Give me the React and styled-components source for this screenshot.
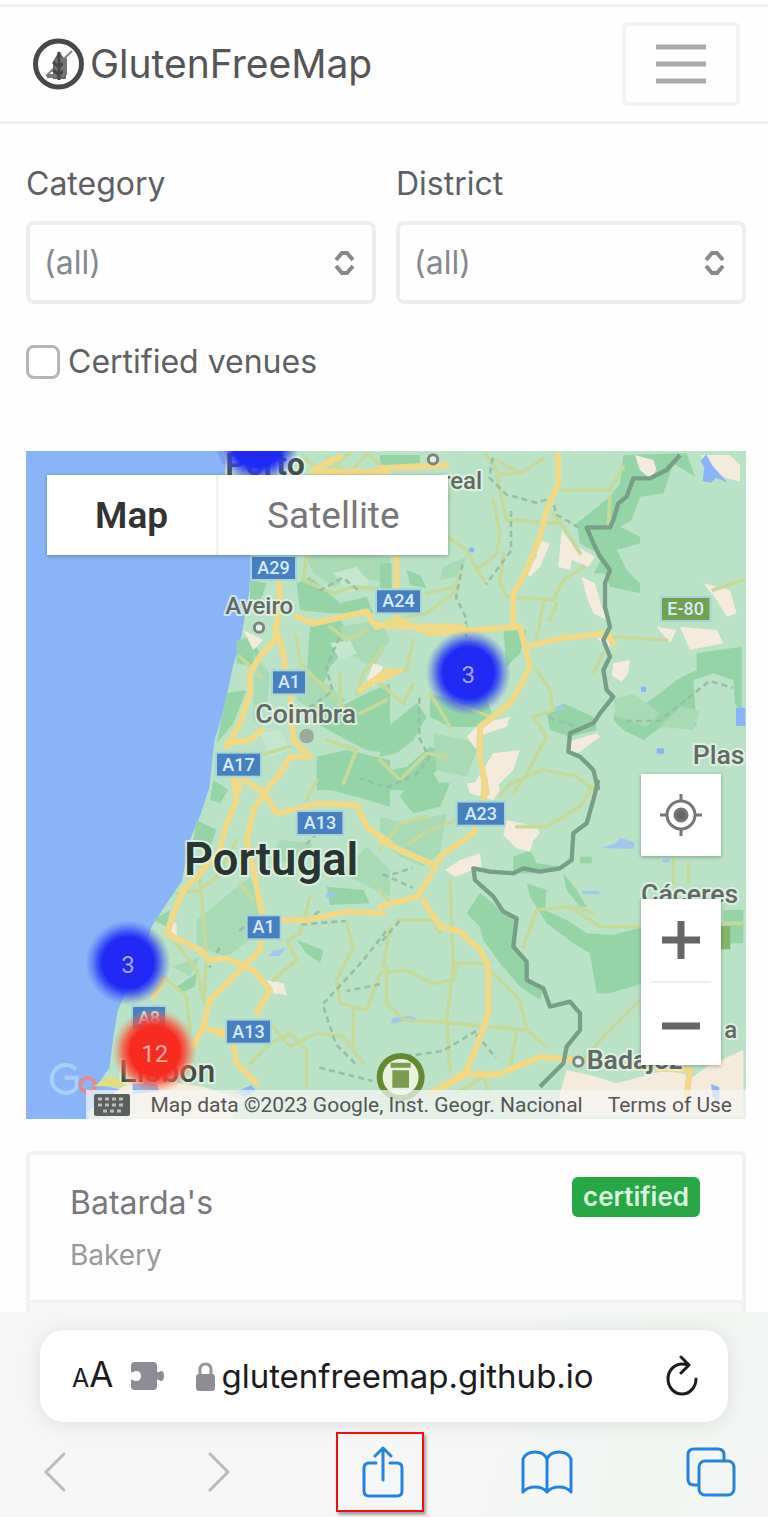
import React from "react";
import styled, { createGlobalStyle } from "styled-components";

const GlobalStyle = createGlobalStyle`
  *, *::before, *::after { box-sizing: border-box; }
  body {
    margin: 0;
    background: #fefefe;
    color: #5e6063;
    font-family: Inter, "Liberation Sans", sans-serif;
  }
  button { margin: 0; padding: 0; border: 0; background: none; font: inherit; color: inherit; cursor: pointer; }
  svg { display: block; }
`;

const Page = styled.div`
  min-height: 100vh;
  padding-top: 4px;
  display: flex;
  flex-direction: column;
`;

const Header = styled.header`
  display: flex;
  align-items: center;
  justify-content: space-between;
  height: 120px;
  padding: 0 28px 0 32px;
  border-top: 3px solid #f1f1f1;
  border-bottom: 3px solid #efefef;
`;

const Brand = styled.a`
  display: flex;
  align-items: center;
  gap: 5px;
  color: #555;
  font-size: 39px;
  line-height: 48px;
  text-decoration: none;
`;

const MenuButton = styled.button`
  display: grid;
  place-items: center;
  width: 118px;
  height: 84px;
  border: 4px solid #f2f2f2;
  border-radius: 6px;
`;

const Content = styled.main`
  display: flex;
  flex-direction: column;
  padding: 40px 22px 0 26px;
`;

const Filters = styled.div`
  display: grid;
  grid-template-columns: 1fr 1fr;
  gap: 20px;
`;

const Field = styled.div`
  display: flex;
  flex-direction: column;
  gap: 17px;
`;

const Label = styled.label`
  font-size: 32px;
  line-height: 40px;
`;

const SelectBox = styled.div`
  position: relative;
  svg { position: absolute; right: 20px; top: 28px; pointer-events: none; }
`;

const Select = styled.select`
  appearance: none;
  width: 100%;
  height: 83px;
  padding: 0 56px 0 14px;
  border: 4px solid #eceeee;
  border-radius: 8px;
  background: #fefefe;
  color: #85898d;
  font: inherit;
  font-size: 32px;
`;

const CheckRow = styled.div`
  display: flex;
  align-items: center;
  gap: 8px;
  margin: 38px 0 69px;
`;

const Checkbox = styled.input`
  appearance: none;
  width: 34px;
  height: 34px;
  margin: 0;
  border: 3px solid #b5b5b5;
  border-radius: 8px;
  background: #fff;
`;

const MapFrame = styled.section`
  position: relative;
  aspect-ratio: 720 / 668;
  overflow: hidden;
  background: #8ab4f8;
  font-family: Roboto, "Liberation Sans", sans-serif;
`;

const MapArt = styled.svg`
  width: 100%;
  height: 100%;
`;

const TypeSwitch = styled.div`
  position: absolute;
  left: 21px;
  top: 24px;
  display: flex;
  background: #fff;
  box-shadow: 0 1px 4px rgba(0, 0, 0, 0.3);
`;

const TypeButton = styled.button`
  height: 80px;
  padding: 0 48px;
  color: ${(p) => (p.$active ? "#333" : "#777")};
  font-size: 37px;
  font-weight: ${(p) => (p.$active ? 600 : 400)};
  & + & { border-left: 3px solid #f2f2f2; }
`;

const MapTools = styled.div`
  position: absolute;
  right: 25px;
  bottom: 54px;
  display: flex;
  flex-direction: column;
  gap: 43px;
`;

const ToolGroup = styled.div`
  display: flex;
  flex-direction: column;
  align-items: center;
  width: 80px;
  background: #fff;
  box-shadow: 0 1px 4px rgba(0, 0, 0, 0.3);
`;

const ToolButton = styled.button`
  display: grid;
  place-items: center;
  width: 80px;
  height: 82px;
`;

const ToolRule = styled.span`
  width: 60px;
  height: 2px;
  background: #eee;
`;

const Attribution = styled.footer`
  position: absolute;
  right: 0;
  bottom: 0;
  display: flex;
  align-items: center;
  height: 29px;
  padding: 0 14px 0 8px;
  background: rgba(245, 245, 245, 0.72);
  color: #555;
  font-size: 21px;
  line-height: 28px;
  white-space: nowrap;
  a { margin-left: 25px; color: inherit; text-decoration: none; }
  button { margin-right: 20px; }
`;

const Card = styled.article`
  margin-top: 32px;
  border: 4px solid #f1f1f1;
  border-bottom: 0;
  border-radius: 6px 6px 0 0;
`;

const CardBody = styled.div`
  display: flex;
  justify-content: space-between;
  align-items: flex-start;
  height: 145px;
  padding: 22px 42px 0 40px;
`;

const VenueName = styled.h2`
  margin: 0 0 12px;
  color: #77797c;
  font-size: 32px;
  font-weight: 400;
  line-height: 52px;
`;

const VenueKind = styled.p`
  margin: 0;
  color: #97999b;
  font-size: 28px;
  line-height: 28px;
`;

const Badge = styled.span`
  padding: 0 11px;
  border-radius: 6px;
  background: #28a745;
  color: #def5e3;
  font-size: 26px;
  font-weight: 600;
  line-height: 40px;
`;

const CardFoot = styled.div`
  height: 12px;
  border-top: 3px solid #f1f1f1;
  background: #f7f7f7;
`;

const BrowserBar = styled.footer`
  display: flex;
  flex-direction: column;
  flex: 1;
  gap: 10px;
  padding: 18px 0 5px;
  background: linear-gradient(105deg, #f6f6f6 60%, #f1f6f2 85%, #f5f6f5);
`;

const AddressBar = styled.div`
  display: flex;
  align-items: center;
  height: 92px;
  margin: 0 40px;
  padding: 0 29px 0 32px;
  border-radius: 24px;
  background: #fff;
  box-shadow: 0 2px 20px rgba(0, 0, 0, 0.1);
  color: #1c1c1e;
`;

const TextSize = styled.button`
  display: flex;
  align-items: baseline;
  margin-right: 18px;
  font-size: 35px;
  line-height: 40px;
  small { font-size: 25px; }
`;

const Puzzle = styled.svg`
  flex: none;
  margin-right: 32px;
`;

const Address = styled.input`
  flex: 1;
  min-width: 0;
  height: 60px;
  margin-left: 6px;
  padding: 0;
  border: 0;
  background: none;
  color: inherit;
  font: inherit;
  font-size: 33px;
`;

const Toolbar = styled.nav`
  display: flex;
  justify-content: space-between;
  padding: 0 29px 0 27px;
`;

const NavButton = styled.button`
  position: relative;
  display: grid;
  place-items: center;
  width: 56px;
  height: 80px;
  color: ${(p) => (p.$muted ? "#bcbcbc" : "#2583dc")};
`;

const Marker = styled.span`
  position: absolute;
  inset: 0 -13px 0 -19px;
  border: 2px solid #f00d0d;
  box-shadow: 2px 3px 3px rgba(0, 0, 0, 0.35);
`;

const Logo = () => (
  <svg width="53" height="54" viewBox="0 0 53 54" fill="none" stroke="#484848" aria-hidden="true">
    <circle cx="26.500" cy="27" r="23" strokeWidth="5" />
    <path d="M14 39 40 14" strokeWidth="2" stroke="#888" />
    <path d="M22 41V25l5-9 6 8v17z" fill="#777" stroke="#666" strokeWidth="2" />
    <path d="M27 15v28M21 25l6 5 6-5M21 33l6 5 6-5" strokeWidth="3" />
    <path d="M15 39h9M33 21v17" strokeWidth="4" stroke="#777" />
  </svg>
);

const Arrows = () => (
  <svg width="23" height="28" viewBox="0 0 23 28" fill="none" stroke="#85898c" strokeWidth="4" aria-hidden="true">
    <path d="m3 11 6-7h5l6 7M3 17l6 7h5l6-7" />
  </svg>
);

const Shield = ({ x, y, w = 135, fill = "#4680c0", children }) => (
  <g>
    <rect x={x} y={y} width={w} height="72" fill={fill} stroke="#a9d4d8" strokeWidth="6" />
    <text x={x + w / 2} y={y + 54} textAnchor="middle" fontSize="54" fontWeight="500" fill="#d7eafc">{children}</text>
  </g>
);

const Place = ({ x, y, size = 72, weight = 500, fill = "#626a65", children }) => (
  <text x={x} y={y} fontSize={size} fontWeight={weight} fill={fill} stroke="#e6f3e9" strokeWidth="12" strokeOpacity=".8" paintOrder="stroke" strokeLinejoin="round">
    {children}
  </text>
);

const Cluster = ({ x, y, tone, children }) => (
  <g>
    <circle cx={x} cy={y} r="128" fill={`url(#${tone})`} />
    <text x={x} y={y + 32} textAnchor="middle" fontSize="72" fill={tone === "red" ? "#ffaaa0" : "#a3a4ff"}>{children}</text>
  </g>
);

/* Map art is drawn in four tiles, three units to a pixel. */
const MapDrawing = () => (
  <MapArt viewBox="0 0 2160 2004" preserveAspectRatio="xMidYMid slice" role="img" aria-label="Map of central Portugal">
    <defs>
      <radialGradient id="blue">
        <stop offset="0" stopColor="#2328ef" />
        <stop offset=".6" stopColor="#2029f5" />
        <stop offset=".72" stopColor="#2a3cf5" stopOpacity=".8" />
        <stop offset="1" stopColor="#4a62f5" stopOpacity="0" />
      </radialGradient>
      <radialGradient id="red">
        <stop offset="0" stopColor="#f22b20" />
        <stop offset=".58" stopColor="#f92a20" />
        <stop offset=".75" stopColor="#fa4b38" stopOpacity=".75" />
        <stop offset="1" stopColor="#fd8a60" stopOpacity="0" />
      </radialGradient>
    </defs>

    <rect width="2160" height="2004" fill="#8ab4f8" />
    <path fill="#bae2c6" d="M585 0 610 60 665 200 675 315 670 420 645 560 620 650 592 780 565 870 550 1010 520 1100 490 1170 468 1290 420 1360 375 1430 350 1530 310 1600 275 1680 262 1760 250 1850 215 1900 300 1920 420 1905 380 1950 180 1980 190 2004H2160V0z" />

    {/* woodland */}
    <g fill="#94d4a7" transform="translate(-18 -33)">
      <path d="M690 420 740 430 715 500 690 510zM830 430 870 410 960 490 1040 470 1060 520 930 520 840 510zM650 600 690 590 720 640 700 680 650 670zM620 760 680 750 640 850 590 910zM870 560 960 540 1000 600 930 680 900 760 860 700zM880 780 960 800 1040 760 1110 730V940L1040 930 980 900 890 850zM890 950 980 930 1110 960V1050H890z" />
      <path fill="#a8dab5" d="M850 330 1110 350V430L1010 410 940 440 880 400zM960 560 1080 540 1110 600 1060 680 980 640zM700 640 750 700 740 800 700 850zM830 680 900 720 980 780 900 820 830 780z" />
      <path fill="#c6e7cf" d="m940 400 70-20 40 50-60 30zM930 610l60-10 20 40-50 20zM720 880l60-10 30 60-60 20z" />
    </g>
    <g fill="#94d4a7" transform="translate(1062 -33)">
      <path d="M0 45h120v30H0zM0 370h35v100H0zM80 390l40 15 20 40-50-10zM730 45 920 40 945 110 880 70 850 160 780 170 755 240 720 260 780 290 780 310 710 330 740 390 780 430 780 460 690 440 675 400 640 400 670 350 600 310 590 250 690 170 720 130z" />
      <path d="M950 640 1085 620V830L1065 790 1060 720 1000 700 940 720 950 860 860 850 790 900 730 870 700 840 720 770 800 790 890 720 950 690zM500 820 550 790 640 830 650 870 570 890 510 870z" />
      <path d="M150 760 250 790 310 750 350 860 210 860 150 830zM370 570 440 570 420 640 380 680zM0 880 110 790 140 830 100 900 50 940 0 950zM150 920 230 940 160 1000 190 1050H0V1000L80 980z" />
      <path fill="#a8dab5" d="M190 380 260 350 230 410 180 420zM700 780 760 760 840 820 800 860 710 830zM840 860l100 10 20-60-60-10zM160 880l140 30-40 100-90-20z" />
    </g>
    <g fill="#94d4a7" transform="translate(-18 987)">
      <path d="M580 0 625 30 600 70 570 60zM530 120 590 150 570 200 520 180zM890 20 1110 10V80L1010 50zM920 320 1030 330 1050 370 930 375zM470 620 530 580 525 620 480 640zM400 420 450 390 440 440zM830 480 910 510 900 550 860 520z" />
      <path fill="#a8dab5" d="m530 420 160-130 40 80-40 110-70 50-90-30zM960 280l80-80 70 70v80zM460 560l80-30-30 60zM780 180l100 10-40 60-90-10z" />
    </g>
    <g fill="#94d4a7" transform="translate(1062 987)">
      <path d="M90 0 210 10 180 80 100 100 60 50zM300 340 340 370 370 400 405 420 400 500 440 550 440 600 490 630 480 660 420 620 360 550 310 480 300 440 260 400zM440 310 500 330 495 390 560 420 620 460 700 465 790 440V610L690 640 650 640 630 520 580 490 500 430 450 350zM400 230 450 210 470 250 550 260 480 280 400 280zM550 280 590 330 620 380 600 380 560 330zM1030 390h60v100h-60zM600 230h35v20h-35z" />
      <path fill="#a8dab5" d="M0 110 80 130 200 100 180 220 130 260 60 230 0 180zM1000 870l60 30v30h-60z" />
    </g>

    {/* built-up areas */}
    <g fill="#f5ebdc" transform="translate(1062 -33)">
      <path d="M765 45 820 60 830 90 810 115 780 90zM960 45h90l30 30v50l-70-20zM475 300l35 10-30 70-30 30-10-10 30-50zM545 270l30 40 70 40-20 30-50-20-5 30-35-10zM605 410l40 20 20 70 15 40-40-20-20-50zM970 430l80 20 20 70-30 10-30-50zM830 560l60 10-20 40zM900 560l110 10 20 40-100 20zM700 670l50-10-5 40-20 25-30-20zM650 880l10 10-60 45-30 10-5-40zM340 940l80-10-20 60-60 60h-70zM260 890l40-40 90-20-10 30-90 30v40zM650 590l50 10-20 30z" />
    </g>
    <g fill="#f5ebdc" transform="translate(1062 987)">
      <path d="M260 10 350 0 360 30 340 60 270 40zM380 120l90 20 10 20-20 20-10 35-40-10-40-40zM240 240l60-20 5 40-80 30-30-20zM540 940l20-70 90 20 60 20 150-40 80 20 40-30 110-50v200H540z" />
    </g>
    <g fill="#f5ebdc" transform="translate(-18 987)">
      <path d="m740 600 50 10 10 35-40-5zM450 430h20v40h-30zM480 910l70 10 120 40-40 60H300l-90-30 70-50 90-60z" />
      <path d="m1060-350 30 10-30 60-20-20zM670-450l60 30-30 30z" />
    </g>

    {/* water */}
    <g fill="#8ab4f8">
      <path d="m2040 10 20 35 45 50-35-15-15 15-25-5 5-40-10-20zM2130 770h28v55h-28zM1845 707h15v15h-15zM1892 892h22v16h-22zM1330 290h14v14h-14z" />
      <path fill="#a3c6ee" d="m1725 1190 40-12 20-18 40 15v18h-45zM1670 1320h50v10h-50zM1100 1700l55-5 20 8-45 8-35 8zM740 1500l40-10-20 25h-30zM900 1325h25v14h-25zM1590 765h25v12h-25zM1910 1225h20v10h-20z" />
      <path d="m2055 1900 25 8v50l-20-20zM320 1880l60-20 20 60-80 10zM625 1925l50-22 15 14-30 20z" />
    </g>

    {/* secondary roads */}
    <g fill="none" stroke="#c5d99b" strokeWidth="11" strokeLinejoin="round" strokeLinecap="round">
      <g transform="translate(-18 -33)">
        <path d="m850 50 60 50 80-60M920 50l60 60 60-70 60 50M860 350l-10 70 90 40 60-20 110 10M830 590l10 80 100 100M930 560l50 40 60-30M1020 820l80-40M1010 760l20-60 60-80M920 900l90 30-40 100M960 700v90l50 60M700 950l110-30M660 650l60 60" />
      </g>
      <g transform="translate(1062 -33)">
        <path d="m320 45 40 60 70-10 60-40M350 110l30 130 160 10M540 150h150l40-70M340 180l20 100-10 60-60 50 30 40M350 60l70 40M520 220l30 40 50 80M200 290l60 40 30 60M370 340l-10 90 20 40 140 10 30-60 60-40M240 400l-20 60-80 60-60 10M490 490l-20 110M530 490l-20 50M210 170l-60 0M100 600l-20 90-60 20M470 690l40 60 10 60-60 20 40 60-60 110-40 60M390 1030l100-40 100 20 50 40M0 730l70 60 30-60M150 760l60 100M230 790l100 40M140 460l90-20M0 960l60 60 80-80 60 10M640 700l30-60M690 170l-5 90M690 590l170 10M1000 450l90-30" />
      </g>
      <g transform="translate(-18 987)">
        <path d="m650 180-60 110-50 40-70 10M660 310l40 50M540 300l20 230-10 140M870 350l-30 110-40 20 30 60-70 60M980 430l20 70-50 100 10 70 80 20 40-110M1000 680v120M690 850l60-60 60-30 50 50v110M750 730l60 70 80-40 80 10 60 80M430 590l70 60 10 100M460 480l70 90 20 90M860 60l30-60M1080 330l30 40" />
      </g>
      <g transform="translate(1062 987)">
        <path d="m0 580 80-10 80 40 60-10 10-50h100M20 560v110l50 50 160 10 200 20M210 300l10 260-20 160 10 150M50 420h110l20 40M0 210l60-80 80-20M90 190l40-30 100-40M30 440l-20 120M340 580l80 80 20 90 60 50M360 740l50 10-20 120M430 500l40-110 100-10 90 60h120M590 380l50 20M650 0l-50 80-100 60-90 0M390 10l-30 40M880 240v70M925 250v60M610 840l60-70 110-110M230 940l80-50 30 80M1030 430h60" />
      </g>
    </g>

    {/* district lines */}
    <g fill="none" stroke="#97bfa5" strokeWidth="8" strokeDasharray="18 12" strokeLinejoin="round">
      <path d="M1400 20 1390 80 1440 130 1530 155 1580 140 1590 190 1660 230M1455 180V300L1380 400M1310 340l-20 100 30 60v80M1180 740v120l30 60-40 50-90 40-80-30M880 420l70-40 50 40M940 560l-40 90 20 70-70 50" />
      <path d="m880 1380-50 40 130-10M1080 1440l-70 90-120 130 40 120 60 60M1062 1600l-100 20M1350 1740l-100 60-140 20M1350 1750l60 70M880 1850l160 40M1120 1410l-60 70M1100 1270l60-20M840 1180l90-90M1800 810l100 0 150-120 70 20" />
      <path d="M1070 1270l90 40M1570 800l90 30M580 1490l-30 60M640 1440l70-60" />
    </g>

    {/* motorways */}
    <g fill="none" strokeLinejoin="round" strokeLinecap="round">
      {["#e6da96", "#f3d983"].map((colour, i) => (
        <g key={colour} stroke={colour} strokeWidth={i ? 12 : 19}>
          <g transform="translate(-18 -33)">
            <path d="M775 400 780 480 765 600 720 650 690 700 690 760 660 850 620 920M765 560 790 640 800 700 815 800 820 900 870 950 810 950 780 1000 730 1060M830 530 880 550 1040 515 1060 550 1110 560M620 910 690 900 725 870M660 1050 640 1000 720 1050M880 90 960 50M880 95 1100 95M1110 690 1020 750" />
          </g>
          <g transform="translate(1062 -33)">
            <path d="M535 45V130L500 210 480 290 440 390 400 460V560M50 340V560M-10 560 60 540 150 580 420 560 430 600 450 680 420 740 390 790 300 860 300 950 320 1060M440 620 540 595 680 580M0 720 60 690M680 580 700 610M50 560H250M0 85 200 75" />
          </g>
          <g transform="translate(-18 987)">
            <path d="M640 0 650 60 620 130 600 210 540 280 490 330 465 390 440 460 540 510 570 540 620 535 700 570 750 630 710 700M740 30 700 90 680 180 700 270 720 370 730 420H860L980 395 1090 400M730 430 720 510 640 590 570 660 550 740 520 800M740 50 770 100 900 70 1010 75 1040 140 1110 190M600 750 640 790 650 850 710 910M550 740 620 770M400 650l30-50" />
          </g>
          <g transform="translate(1062 987)">
            <path d="M0 380 110 350 150 290 180 230 280 160 310 60 315 0M0 180 60 210 150 250M130 360 180 440 240 455 300 510 325 560 325 700 290 800 250 890 150 940M170 930 250 880 350 885 480 830 590 840M730 860l200 10-10 80" />
          </g>
        </g>
      ))}
    </g>

    {/* national border */}
    <g fill="none" stroke="#779e87" strokeWidth="13" strokeLinejoin="round">
      <path transform="translate(1062 -33)" d="M900 45 860 90 810 115H760L740 170 715 190 700 240 690 262H620L640 310 660 350 690 390 675 430V500L690 560 670 600 690 650 670 690 680 750 700 770 660 820 640 850 570 880 565 935 600 950 640 990 655 1050" />
      <path transform="translate(1062 987)" d="M655 0 640 60 620 130 580 160 575 240 540 265 480 275 430 265 400 280 330 275 280 265 285 300 340 350 370 395 410 415 400 500 440 545V600L490 625 510 680 570 665 600 700V750L560 800 550 850 480 920" />
    </g>

    <Shield x={675} y={315}>A29</Shield>
    <Shield x={1050} y={415}>A24</Shield>
    <Shield x={738} y={658} w={102}>A1</Shield>
    <Shield x={570} y={905}>A17</Shield>
    <Shield x={812} y={1080} w={140}>A13</Shield>
    <Shield x={1292} y={1052} w={145}>A23</Shield>
    <Shield x={662} y={1393} w={102}>A1</Shield>
    <Shield x={600} y={1706}>A13</Shield>
    <Shield x={318} y={1665} w={102}>A8</Shield>
    <Shield x={1905} y={438} w={148} fill="#71a04f">E-80</Shield>
    <rect x="2085" y="1425" width="28" height="70" fill="#83b66b" />

    <g fill="#e8efe9" stroke="#7d8580" strokeWidth="9">
      <circle cx="699" cy="530" r="14" />
      <circle cx="1221" cy="25" r="14" />
      <circle cx="1657" cy="1832" r="14" />
    </g>
    <circle cx="842" cy="855" r="22" fill="#9caa9e" />

    <Place x={598} y={72} size={96} weight={700} fill="#45504a">Porto</Place>
    <Place x={1248} y={115}>real</Place>
    <Place x={598} y={490}>Aveiro</Place>
    <Place x={688} y={815} size={80}>Coimbra</Place>
    <Place x={474} y={1272} size={136} weight={600} fill="#293530">Portugal</Place>
    <Place x={2000} y={940} size={80}>Plas</Place>
    <Place x={1845} y={1356} size={80}>Cáceres</Place>
    <Place x={1682} y={1855} size={80} weight={600}>Badajoz</Place>
    <Place x={2095} y={1762}>a</Place>
    <Place x={280} y={1892} size={96} fill="#444c49">Lisbon</Place>

    <circle cx="1124" cy="1878" r="72" fill="#648a31" />
    <circle cx="1124" cy="1878" r="54" fill="#e9f2df" />
    <path d="M1094 1850h60v-15h-60zm5 8h50v52h-50z" fill="#7b9b4e" />

    <g fill="none" strokeWidth="12">
      <path d="M150 1855a42 42 0 1 0 2 55v-30h-36" stroke="#a9d0fb" />
      <circle cx="185" cy="1902" r="22" stroke="#e08a96" />
      <path d="m225 1900 30-18 30 18z" stroke="#e9dd78" />
    </g>

    <Cluster x={694} y={-28} tone="blue" />
    <Cluster x={1327} y={665} tone="blue">3</Cluster>
    <Cluster x={306} y={1535} tone="blue">3</Cluster>
    <Cluster x={386} y={1800} tone="red">12</Cluster>
  </MapArt>
);

const App = () => (
  <>
    <GlobalStyle />
    <Page>
      <Header>
        <Brand href="#"><Logo />GlutenFreeMap</Brand>
        <MenuButton type="button" aria-label="Menu">
          <svg width="50" height="42" viewBox="0 0 50 42" stroke="#aaa" strokeWidth="5">
            <path d="M0 4h50M0 21h50M0 38h50" />
          </svg>
        </MenuButton>
      </Header>

      <Content>
        <Filters>
          {["Category", "District"].map((name) => (
            <Field key={name}>
              <Label htmlFor={name}>{name}</Label>
              <SelectBox>
                <Select id={name}><option>(all)</option></Select>
                <Arrows />
              </SelectBox>
            </Field>
          ))}
        </Filters>
        <CheckRow>
          <Checkbox id="certified" type="checkbox" />
          <Label htmlFor="certified">Certified venues</Label>
        </CheckRow>

        <MapFrame>
          <MapDrawing />
          <Attribution>
            <button type="button" aria-label="Keyboard shortcuts">
              <svg width="36" height="22" viewBox="0 0 36 22" fill="#5b605f">
                <rect width="36" height="22" rx="2" />
                <path d="M4 5h28M4 11h28M9 17h18" stroke="#b9bdbb" strokeWidth="3" strokeDasharray="4 3" />
              </svg>
            </button>
            Map data ©2023 Google, Inst. Geogr. Nacional
            <a href="#terms">Terms of Use</a>
          </Attribution>
          <TypeSwitch>
            <TypeButton type="button" $active>Map</TypeButton>
            <TypeButton type="button">Satellite</TypeButton>
          </TypeSwitch>
          <MapTools>
            <ToolGroup>
              <ToolButton type="button" aria-label="My location">
                <svg width="42" height="42" viewBox="0 0 42 42" fill="none" stroke="#777" strokeWidth="3">
                  <circle cx="21" cy="21" r="14" />
                  <circle cx="21" cy="21" r="6" fill="#666" />
                  <path d="M21 0v8M21 34v8M0 21h8M34 21h8" />
                </svg>
              </ToolButton>
            </ToolGroup>
            <ToolGroup>
              <ToolButton type="button" aria-label="Zoom in">
                <svg width="38" height="38" viewBox="0 0 38 38" stroke="#666" strokeWidth="7"><path d="M19 0v38M0 19h38" /></svg>
              </ToolButton>
              <ToolRule />
              <ToolButton type="button" aria-label="Zoom out">
                <svg width="38" height="38" viewBox="0 0 38 38" stroke="#666" strokeWidth="7"><path d="M0 21h38" /></svg>
              </ToolButton>
            </ToolGroup>
          </MapTools>
        </MapFrame>

        <Card>
          <CardBody>
            <div>
              <VenueName>Batarda's</VenueName>
              <VenueKind>Bakery</VenueKind>
            </div>
            <Badge>certified</Badge>
          </CardBody>
          <CardFoot />
        </Card>
      </Content>

      <BrowserBar>
        <AddressBar>
          <TextSize type="button" aria-label="Text size"><small>A</small>A</TextSize>
          <Puzzle width="33" height="28" viewBox="0 0 33 28" fill="#8e8d95" aria-hidden="true">
            <path d="M4 0h18q4 0 4 4v6c2 1 3-1 4-1q3 0 3 5t-3 5c-1 0-2-2-4-1v6q0 4-4 4H4q-4 0-4-4v-6c2-1 3 1 5 1q5 0 5-5t-5-5c-2 0-3 2-5 1V4q0-4 4-4z" />
          </Puzzle>
          <svg width="19" height="29" viewBox="0 0 19 29" aria-hidden="true">
            <path d="M4 14V8q0-6 5.500-6T15 8v6" fill="none" stroke="#96969b" strokeWidth="3" />
            <rect y="12" width="19" height="17" rx="3" fill="#8d8d93" />
          </svg>
          <Address type="text" aria-label="Address" defaultValue="glutenfreemap.github.io" />
          <button type="button" aria-label="Reload">
            <svg width="34" height="42" viewBox="0 0 34 42" fill="none" stroke="#1c1c1e" strokeWidth="3" strokeLinecap="round" strokeLinejoin="round">
              <path d="M23 10q-3-1-6-1a14 15 0 1 0 14 15M16 2l8 8-8 8" />
            </svg>
          </button>
        </AddressBar>
        <Toolbar aria-label="Browser">
          <NavButton type="button" $muted aria-label="Back">
            <svg width="22" height="40" viewBox="0 0 22 40" fill="none" stroke="currentColor" strokeWidth="3" strokeLinecap="round"><path d="M20 2 2 20l18 18" /></svg>
          </NavButton>
          <NavButton type="button" $muted aria-label="Forward">
            <svg width="22" height="40" viewBox="0 0 22 40" fill="none" stroke="currentColor" strokeWidth="3" strokeLinecap="round"><path d="m2 2 18 18L2 38" /></svg>
          </NavButton>
          <NavButton type="button" aria-label="Share">
            <svg width="42" height="52" viewBox="0 0 42 52" fill="none" stroke="currentColor" strokeWidth="3" strokeLinecap="round" strokeLinejoin="round">
              <path d="M14 17H7q-5 0-5 5v23q0 5 5 5h28q5 0 5-5V22q0-5-5-5h-7M21 34V2M13 10l8-8 8 8" />
            </svg>
            <Marker />
          </NavButton>
          <NavButton type="button" aria-label="Bookmarks">
            <svg width="52" height="44" viewBox="0 0 52 44" fill="none" stroke="currentColor" strokeWidth="3" strokeLinecap="round" strokeLinejoin="round">
              <path d="M26 9Q23 2 14 2T2 9v33q4-5 12-5t12 5V9q3-7 12-7t12 7v33q-4-5-12-5t-12 5" />
            </svg>
          </NavButton>
          <NavButton type="button" aria-label="Tabs">
            <svg width="50" height="50" viewBox="0 0 50 50" fill="none" stroke="currentColor" strokeWidth="3" strokeLinejoin="round">
              <rect x="13" y="14" width="35" height="34" rx="6" />
              <path d="M13 38H8q-6 0-6-6V8q0-6 6-6h24q6 0 6 6v6" />
            </svg>
          </NavButton>
        </Toolbar>
      </BrowserBar>
    </Page>
  </>
);

export default App;
